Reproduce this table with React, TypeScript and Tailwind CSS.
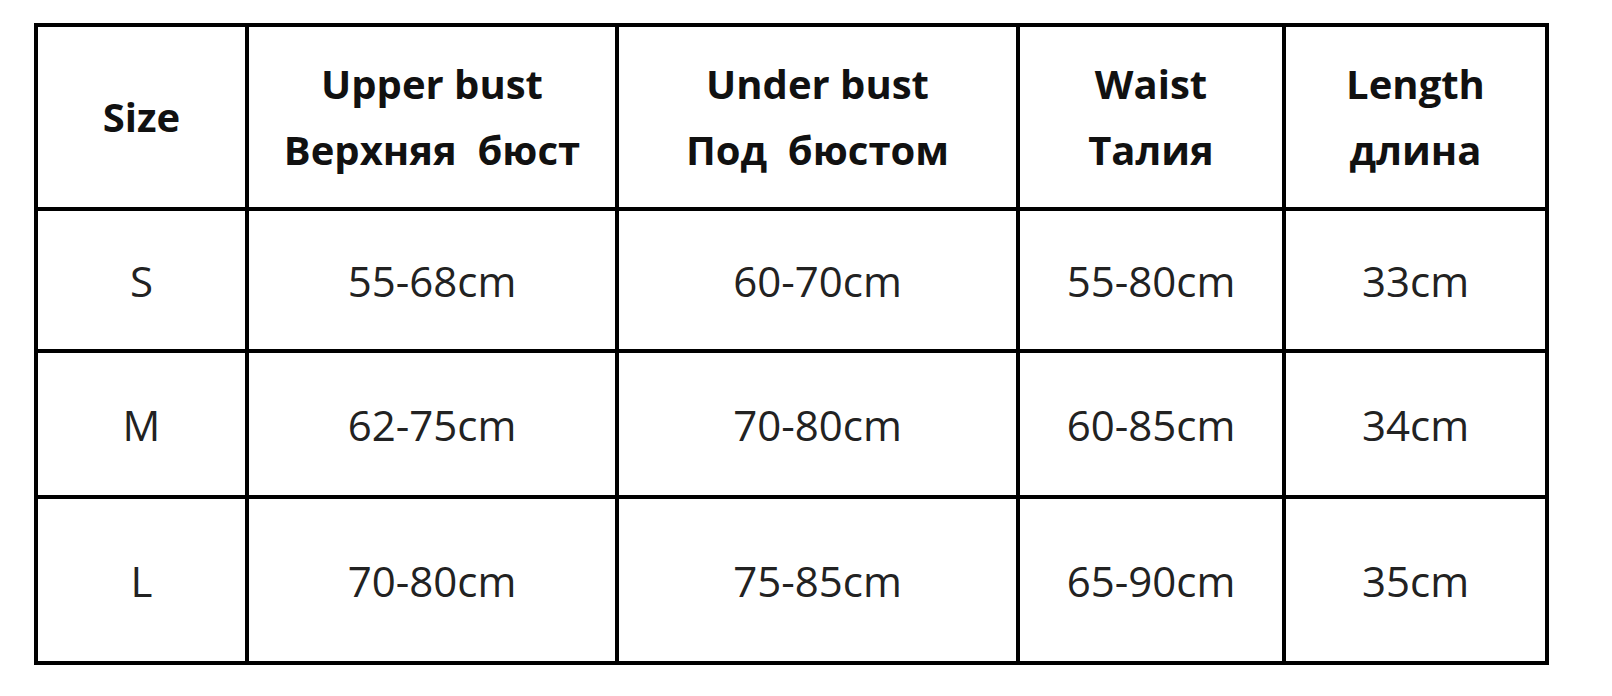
const headers: [string, string | null][] = [
  ["Size", null],
  ["Upper bust", "Верхняя  бюст"],
  ["Under bust", "Под  бюстом"],
  ["Waist", "Талия"],
  ["Length", "длина"],
]

const rows = [
  ["S", "55-68cm", "60-70cm", "55-80cm", "33cm"],
  ["M", "62-75cm", "70-80cm", "60-85cm", "34cm"],
  ["L", "70-80cm", "75-85cm", "65-90cm", "35cm"],
]

export default function App() {
  return (
    <div className="h-[696px] w-[1612px] bg-white pl-[34px] pt-[23px] font-['Open_Sans',sans-serif]">
      <div className="grid w-fit grid-cols-[207px_366px_397px_262px_259px] grid-rows-[180px_138px_142px_162px] gap-[4px] bg-black p-[4px]">
        {headers.map(([en, ru]) => (
          <div key={en} className="flex flex-col items-center justify-center bg-white text-[40px] font-bold leading-[66px] text-[#111]">
            <span>{en}</span>
            {ru && <span className="whitespace-pre">{ru}</span>}
          </div>
        ))}
        {rows.map((row) =>
          row.map((cell, i) => (
            <div key={row[0] + i} className="flex items-center justify-center bg-white text-[42px] text-[#222]">
              {cell}
            </div>
          )),
        )}
      </div>
    </div>
  )
}
